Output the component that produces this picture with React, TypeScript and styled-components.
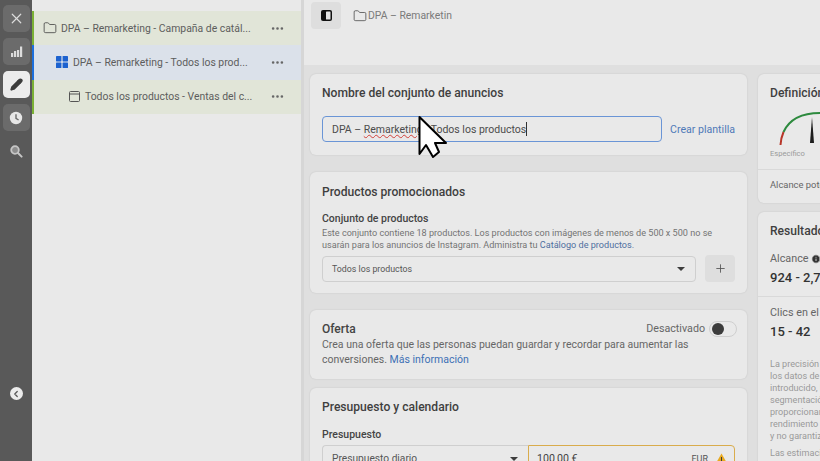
import React from "react";
import styled, { createGlobalStyle } from "styled-components";
import { X, Pencil, Plus, MoreHorizontal, Folder, ChevronLeft, Info } from "lucide-react";

const GlobalStyle = createGlobalStyle`
    html, body {
        margin: 0;
        padding: 0;
        width: 820px;
        height: 461px;
        overflow: hidden;
        background: #e9e9e9;
        font-family: Roboto, "Liberation Sans", Arial, sans-serif;
    }
    * { box-sizing: border-box; }
`;

const Page = styled.div`
    position: relative;
    display: flex;
    width: 820px;
    height: 461px;
    overflow: hidden;
`;

const Rail = styled.nav`
    width: 32px;
    flex: none;
    display: flex;
    flex-direction: column;
    align-items: center;
    padding-top: 5px;
    gap: 6px;
    background: #595959;
`;

const RailButton = styled.button<{ $active?: boolean; $plain?: boolean }>`
    width: 27px;
    height: 27px;
    padding: 0;
    display: flex;
    align-items: center;
    justify-content: center;
    border: none;
    border-radius: 5px;
    background: ${(p) => (p.$active ? "#ececec" : p.$plain ? "transparent" : "#6b6b6b")};
    color: ${(p) => (p.$active ? "#3c3c3c" : "#dcdcdc")};
`;

const RailFooter = styled.div`
    margin-top: auto;
    margin-bottom: 61px;
    width: 13px;
    height: 13px;
    border-radius: 50%;
    background: #ececec;
    color: #595959;
    display: flex;
    align-items: center;
    justify-content: center;
`;

const TreePanel = styled.aside`
    width: 269px;
    flex: none;
    padding-top: 11px;
    background: #e9e9e9;
`;

const TreeRow = styled.div<{ $indent: number; $selected?: boolean }>`
    height: 34.33px;
    display: flex;
    align-items: center;
    padding-left: ${(p) => p.$indent}px;
    padding-right: 16px;
    border-left: 2px solid ${(p) => (p.$selected ? "#1d6fdc" : "#7bb135")};
    background: ${(p) => (p.$selected ? "#dbe1ea" : "#e1e5d8")};
`;

const TreeIcon = styled.span`
    width: 14px;
    height: 14px;
    flex: none;
    margin-right: 4px;
    display: flex;
    align-items: center;
    justify-content: center;
    color: #444;
`;

const TreeLabel = styled.span`
    flex: 1;
    min-width: 0;
    font-size: 10.4px;
    color: #5d5d5d;
    white-space: nowrap;
`;

const RowMenu = styled.span`
    flex: none;
    display: flex;
    color: #666;
`;

const Divider = styled.div`
    width: 3px;
    flex: none;
    background: #d6d6d6;
`;

const Main = styled.main`
    flex: 1;
    min-width: 0;
    display: flex;
    flex-direction: column;
    background: #dfdfdf;
`;

const TopBar = styled.header`
    height: 65px;
    flex: none;
    display: flex;
    align-items: flex-start;
    padding: 2px 0 0 7px;
    background: #e9e9e9;
`;

const PanelToggle = styled.button`
    width: 30px;
    height: 27px;
    padding: 0;
    border: none;
    border-radius: 4px;
    background: #dedede;
    display: flex;
    align-items: center;
    justify-content: center;
`;

const Crumb = styled.div`
    display: flex;
    align-items: center;
    gap: 1px;
    height: 27px;
    margin-left: 12px;
    font-size: 10.4px;
    color: #7a7a7a;
    & svg { color: #444; }
`;

const Columns = styled.div`
    flex: 1;
    min-height: 0;
    display: flex;
    align-items: flex-start;
    gap: 11px;
    padding: 9px 0 0 6px;
    overflow: hidden;
`;

const LeftColumn = styled.div`
    width: 437px;
    flex: none;
    display: flex;
    flex-direction: column;
`;

const RightColumn = styled.div`
    width: 100px;
    flex: none;
    display: flex;
    flex-direction: column;
    gap: 9px;
`;

const Card = styled.section<{ $height: number; $gap?: number; $top?: number }>`
    flex: none;
    height: ${(p) => p.$height}px;
    margin-bottom: ${(p) => p.$gap ?? 17}px;
    padding: ${(p) => p.$top ?? 12}px 12px 0;
    border-radius: 6px;
    background: #e9e9e9;
    box-shadow: 0 0 2px rgba(0, 0, 0, 0.12);
`;

const SideCard = styled(Card)`
    width: 118px;
    margin-bottom: 0;
    overflow: hidden;
`;

const CardTitle = styled.h2`
    margin: 0;
    font-size: 12.1px;
    line-height: 14px;
    font-weight: 500;
    color: #3f3f3f;
    white-space: nowrap;
`;

const NameRow = styled.div`
    display: flex;
    align-items: center;
    margin-top: 16px;
`;

const NameInput = styled.div`
    width: 340px;
    height: 26px;
    flex: none;
    display: flex;
    align-items: center;
    padding-left: 9px;
    border: 1.5px solid #6a95d6;
    border-radius: 4px;
    font-size: 10.5px;
    color: #4c4c4c;
    white-space: pre;
`;

const Misspelled = styled.span`
    text-decoration: underline wavy #d2413a 1px;
`;

const Caret = styled.span`
    width: 1px;
    height: 14px;
    background: #333;
`;

const LinkAction = styled.a`
    margin-left: 8px;
    font-size: 10.6px;
    color: #4f79b8;
    white-space: nowrap;
`;

const FieldLabel = styled.div<{ $top: number }>`
    margin-top: ${(p) => p.$top}px;
    font-size: 10.5px;
    line-height: 13px;
    font-weight: 500;
    color: #444;
`;

const HelpText = styled.p`
    margin: 2px 0 0;
    font-size: 9.1px;
    line-height: 12px;
    color: #747474;
    white-space: nowrap;
`;

const InlineLink = styled.a`
    color: #4f6f9f;
`;

const SelectRow = styled.div`
    display: flex;
    align-items: center;
    gap: 9px;
    margin-top: 4px;
`;

const SelectBox = styled.div`
    flex: 1;
    height: 26px;
    display: flex;
    align-items: center;
    justify-content: space-between;
    padding: 0 10px 0 9px;
    border: 1px solid #cfcfcf;
    border-radius: 4px;
    font-size: 8.8px;
    color: #555;
`;

const Arrow = styled.span`
    width: 0;
    height: 0;
    border-left: 4px solid transparent;
    border-right: 4px solid transparent;
    border-top: 4px solid #3d3d3d;
`;

const AddButton = styled.button`
    width: 30px;
    height: 27px;
    padding: 0;
    flex: none;
    border: none;
    border-radius: 4px;
    background: #dedede;
    color: #555;
    display: flex;
    align-items: center;
    justify-content: center;
`;

const OfferHead = styled.div`
    display: flex;
    align-items: center;
    justify-content: space-between;
    height: 15px;
    margin: -1px -2px 0 0;
`;

const OfferTitle = styled.h3`
    margin: 0;
    font-size: 12px;
    font-weight: 500;
    color: #444;
`;

const ToggleWrap = styled.div`
    display: flex;
    align-items: center;
    gap: 4px;
    font-size: 10.7px;
    color: #666;
`;

const Toggle = styled.div`
    width: 28px;
    height: 16px;
    padding: 2px;
    border: 1px solid #cfcfcf;
    border-radius: 8px;
    & > span {
        display: block;
        width: 12px;
        height: 12px;
        margin-top: -0.5px;
        border-radius: 50%;
        background: #3c3c3c;
    }
`;

const OfferText = styled.p`
    margin: 1px 0 0;
    font-size: 10.5px;
    line-height: 15px;
    color: #666;
`;

const OfferLink = styled.a`
    color: #3d70b5;
`;

const BudgetRow = styled.div`
    display: flex;
    margin-top: 4px;
    height: 30px;
`;

const BudgetSelect = styled.div`
    width: 206px;
    flex: none;
    display: flex;
    align-items: center;
    justify-content: space-between;
    padding: 0 10px 3px 9px;
    border: 1px solid #cfcfcf;
    border-right: none;
    border-radius: 4px 0 0 4px;
    font-size: 10.2px;
    color: #555;
`;

const BudgetInput = styled.div`
    flex: 1;
    display: flex;
    align-items: center;
    padding: 0 6px 3px 8px;
    border: 1px solid #d9ac4c;
    border-radius: 0 4px 4px 0;
    font-size: 10.6px;
    color: #444;
`;

const Currency = styled.span`
    margin-left: auto;
    margin-right: 7px;
    font-size: 9px;
    color: #555;
`;

const GaugeWrap = styled.div`
    margin-top: 10px;
    height: 39px;
`;

const GaugeCaption = styled.div`
    font-size: 7.6px;
    line-height: 9px;
    color: #9a9a9a;
`;

const SideRule = styled.hr`
    margin: 11px -12px 0;
    border: none;
    border-top: 1px solid #d9d9d9;
`;

const SideLabel = styled.div<{ $top: number; $info?: boolean }>`
    display: flex;
    align-items: center;
    gap: 2px;
    margin-top: ${(p) => p.$top}px;
    font-size: ${(p) => (p.$info ? "10.8px" : "9.4px")};
    line-height: 13px;
    color: #666;
    white-space: nowrap;
`;

const SideValue = styled.div`
    margin-top: 5px;
    font-size: 13px;
    line-height: 15px;
    font-weight: 500;
    color: #333;
    white-space: nowrap;
`;

const Disclaimer = styled.p<{ $top: number }>`
    margin: ${(p) => p.$top}px 0 0;
    font-size: 9.1px;
    line-height: 12px;
    color: #9a9a9a;
    white-space: pre;
`;

const CursorLayer = styled.svg`
    position: absolute;
    left: 418px;
    top: 115px;
`;

function BarsIcon() {
    return (
        <svg width="13" height="13" viewBox="0 0 13 13" fill="#dcdcdc">
            <rect x="1" y="8" width="2.2" height="4" />
            <rect x="4" y="6" width="2.2" height="6" />
            <rect x="7" y="5" width="2.2" height="7" />
            <rect x="10" y="1.5" width="2.2" height="10.5" />
        </svg>
    );
}

function ClockIcon() {
    return (
        <svg width="14" height="14" viewBox="0 0 14 14">
            <circle cx="7" cy="7" r="6.2" fill="#e6e6e6" />
            <path d="M7 3.2V7.4L9.6 9" fill="none" stroke="#6b6b6b" strokeWidth="1.4" />
        </svg>
    );
}

function ZoomIcon() {
    return (
        <svg width="14" height="14" viewBox="0 0 14 14" fill="none">
            <circle cx="6" cy="6" r="3.8" fill="#8d8d8d" stroke="#c6c6c6" strokeWidth="1.8" />
            <path d="M9 9L12.6 12.6" stroke="#c6c6c6" strokeWidth="2" strokeLinecap="round" />
        </svg>
    );
}

function GridIcon() {
    return (
        <svg width="14" height="14" viewBox="0 0 14 14" fill="#1d62cf">
            <rect x="1" y="1" width="5.4" height="5.4" rx="0.6" />
            <rect x="7.6" y="1" width="5.4" height="5.4" rx="0.6" />
            <rect x="1" y="7.6" width="5.4" height="5.4" rx="0.6" />
            <rect x="7.6" y="7.6" width="5.4" height="5.4" rx="0.6" />
        </svg>
    );
}

function AdIcon() {
    return (
        <svg width="13" height="13" viewBox="0 0 13 13" fill="none" stroke="#555" strokeWidth="1">
            <rect x="1.5" y="1.5" width="10" height="10" rx="1" />
            <path d="M1.5 4h10" />
        </svg>
    );
}

function PanelIcon() {
    return (
        <svg width="13" height="13" viewBox="0 0 13 13">
            <rect x="1" y="1" width="11" height="11" rx="2" fill="#111" />
            <rect x="6" y="2.5" width="4.5" height="8" rx="0.6" fill="#e4e4e4" />
        </svg>
    );
}

function Gauge() {
    return (
        <svg width="60" height="39" viewBox="0 0 60 39" fill="none" strokeWidth="2">
            <path d="M10.5 35 C10.8 30 11.8 26 13.5 22" stroke="#b8372a" />
            <path d="M13.5 22 C19 10 30 3 50 3" stroke="#2d8a3e" />
            <path d="M42 7 L44 33 L40 33 Z" fill="#1e1e1e" stroke="none" />
        </svg>
    );
}

function WarningIcon() {
    return (
        <svg width="13" height="12" viewBox="0 0 13 12">
            <path d="M6.5 0.5 L12.8 11.5 H0.2 Z" fill="#e8a91f" />
            <rect x="6" y="4" width="1" height="4" fill="#3a3a3a" />
            <rect x="6" y="9" width="1" height="1" fill="#3a3a3a" />
        </svg>
    );
}

function MouseCursor() {
    return (
        <CursorLayer width="30" height="46" viewBox="0 0 30 46">
            <path
                d="M1.5 2 L1.5 39 L8 30 L15 42 L21 37 L17 28 L28 28 Z"
                fill="#ffffff"
                stroke="#000000"
                strokeWidth="2"
                strokeLinejoin="round"
            />
        </CursorLayer>
    );
}

const treeRows = [
    { indent: 9, label: "DPA – Remarketing - Campaña de catál...", icon: <Folder size={14} strokeWidth={1.4} /> },
    { indent: 21, label: "DPA – Remarketing - Todos los prod...", icon: <GridIcon />, selected: true },
    { indent: 33, label: "Todos los productos - Ventas del c...", icon: <AdIcon /> },
];

export default function App() {
    return (
        <Page>
            <GlobalStyle />
            <Rail>
                <RailButton><X size={17} strokeWidth={1.7} /></RailButton>
                <RailButton><BarsIcon /></RailButton>
                <RailButton $active><Pencil size={13} strokeWidth={2.6} fill="#3c3c3c" /></RailButton>
                <RailButton><ClockIcon /></RailButton>
                <RailButton $plain><ZoomIcon /></RailButton>
                <RailFooter><ChevronLeft size={10} strokeWidth={3} /></RailFooter>
            </Rail>

            <TreePanel>
                {treeRows.map((row) => (
                    <TreeRow key={row.label} $indent={row.indent} $selected={row.selected}>
                        <TreeIcon>{row.icon}</TreeIcon>
                        <TreeLabel>{row.label}</TreeLabel>
                        <RowMenu><MoreHorizontal size={15} strokeWidth={2.2} /></RowMenu>
                    </TreeRow>
                ))}
            </TreePanel>
            <Divider />

            <Main>
                <TopBar>
                    <PanelToggle><PanelIcon /></PanelToggle>
                    <Crumb>
                        <Folder size={14} strokeWidth={1.3} />
                        DPA – Remarketin
                    </Crumb>
                </TopBar>

                <Columns>
                    <LeftColumn>
                        <Card $height={81}>
                            <CardTitle>Nombre del conjunto de anuncios</CardTitle>
                            <NameRow>
                                <NameInput>
                                    DPA – <Misspelled>Remarketing</Misspelled> - Todos los productos<Caret />
                                </NameInput>
                                <LinkAction>Crear plantilla</LinkAction>
                            </NameRow>
                        </Card>

                        <Card $height={121} $top={13}>
                            <CardTitle>Productos promocionados</CardTitle>
                            <FieldLabel $top={13}>Conjunto de productos</FieldLabel>
                            <HelpText>
                                Este conjunto contiene 18 productos. Los productos con imágenes de menos de 500 x 500 no se
                                <br />
                                usarán para los anuncios de Instagram. Administra tu <InlineLink>Catálogo de productos.</InlineLink>
                            </HelpText>
                            <SelectRow>
                                <SelectBox>Todos los productos<Arrow /></SelectBox>
                                <AddButton><Plus size={13} strokeWidth={1.6} /></AddButton>
                            </SelectRow>
                        </Card>

                        <Card $height={69} $gap={9}>
                            <OfferHead>
                                <OfferTitle>Oferta</OfferTitle>
                                <ToggleWrap>Desactivado<Toggle><span /></Toggle></ToggleWrap>
                            </OfferHead>
                            <OfferText>
                                Crea una oferta que las personas puedan guardar y recordar para aumentar las
                                <br />
                                conversiones. <OfferLink>Más información</OfferLink>
                            </OfferText>
                        </Card>

                        <Card $height={90} $gap={0}>
                            <CardTitle>Presupuesto y calendario</CardTitle>
                            <FieldLabel $top={14}>Presupuesto</FieldLabel>
                            <BudgetRow>
                                <BudgetSelect>Presupuesto diario<Arrow /></BudgetSelect>
                                <BudgetInput>100,00 €<Currency>EUR</Currency><WarningIcon /></BudgetInput>
                            </BudgetRow>
                        </Card>
                    </LeftColumn>

                    <RightColumn>
                        <SideCard $height={129}>
                            <CardTitle>Definición de</CardTitle>
                            <GaugeWrap><Gauge /></GaugeWrap>
                            <GaugeCaption>Específico</GaugeCaption>
                            <SideRule />
                            <SideLabel $top={8}>Alcance potencial</SideLabel>
                        </SideCard>

                        <SideCard $height={260}>
                            <CardTitle>Resultados</CardTitle>
                            <SideLabel $top={14} $info>Alcance <Info size={10} fill="#333" color="#e9e9e9" /></SideLabel>
                            <SideValue>924 - 2,7</SideValue>
                            <SideRule />
                            <SideLabel $top={9} $info>Clics en el enlace</SideLabel>
                            <SideValue>15 - 42</SideValue>
                            <Disclaimer $top={19}>
                                {"La precisión de\nlos datos de\nintroducido, la\nsegmentación\nproporcionar\nrendimiento\ny no garantiz"}
                            </Disclaimer>
                            <Disclaimer $top={5}>Las estimaciones</Disclaimer>
                        </SideCard>
                    </RightColumn>
                </Columns>
            </Main>

            <MouseCursor />
        </Page>
    );
}
